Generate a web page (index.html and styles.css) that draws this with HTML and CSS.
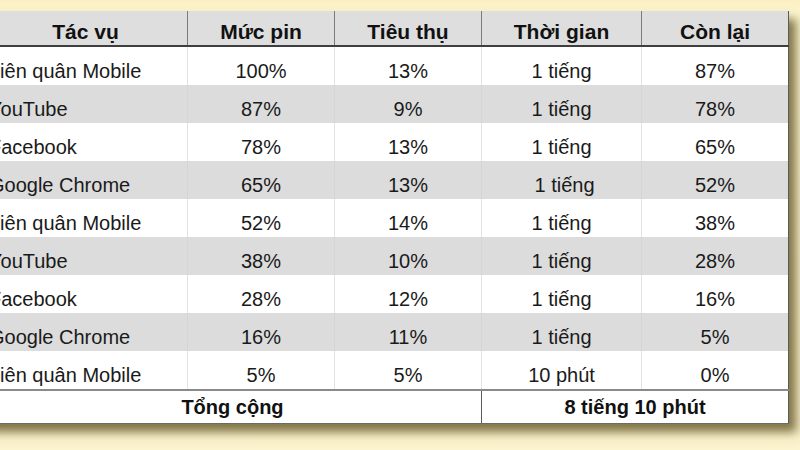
FILE: index.html
```html
<!DOCTYPE html>
<html lang="vi">
<head>
<meta charset="utf-8">
<title>Bảng thời lượng pin</title>
<link rel="stylesheet" href="styles.css">
</head>
<body>
<div class="stage">
  <table class="battery">
    <colgroup>
      <col class="c1"><col class="c2"><col class="c3"><col class="c4"><col class="c5">
    </colgroup>
    <thead>
      <tr><th>Tác vụ</th><th>Mức pin</th><th>Tiêu thụ</th><th>Thời gian</th><th>Còn lại</th></tr>
    </thead>
    <tbody>
      <tr><td class="app">Liên quân Mobile</td><td>100%</td><td>13%</td><td>1 tiếng</td><td>87%</td></tr>
      <tr class="alt"><td class="app">YouTube</td><td>87%</td><td>9%</td><td>1 tiếng</td><td>78%</td></tr>
      <tr><td class="app">Facebook</td><td>78%</td><td>13%</td><td>1 tiếng</td><td>65%</td></tr>
      <tr class="alt"><td class="app">Google Chrome</td><td>65%</td><td>13%</td><td class="shift">1 tiếng</td><td>52%</td></tr>
      <tr><td class="app">Liên quân Mobile</td><td>52%</td><td>14%</td><td>1 tiếng</td><td>38%</td></tr>
      <tr class="alt"><td class="app">YouTube</td><td>38%</td><td>10%</td><td>1 tiếng</td><td>28%</td></tr>
      <tr><td class="app">Facebook</td><td>28%</td><td>12%</td><td>1 tiếng</td><td>16%</td></tr>
      <tr class="alt"><td class="app">Google Chrome</td><td>16%</td><td>11%</td><td>1 tiếng</td><td>5%</td></tr>
      <tr><td class="app">Liên quân Mobile</td><td>5%</td><td>5%</td><td>10 phút</td><td>0%</td></tr>
    </tbody>
    <tfoot>
      <tr><td colspan="3">Tổng cộng</td><td colspan="2">8 tiếng 10 phút</td></tr>
    </tfoot>
  </table>
</div>
</body>
</html>
```
FILE: styles.css
```css
html, body {
  margin: 0;
  padding: 0;
}
body {
  width: 800px;
  height: 450px;
  overflow: hidden;
  background: linear-gradient(to bottom, #fbefc2 0px, #fcf3cd 11px, #f6ecc4 430px, #fcf4cf 450px);
  font-family: "Liberation Sans", Arial, sans-serif;
  color: #1a1a1a;
}
.stage {
  padding-top: 11px;
}
.battery {
  margin-left: -17px;
  width: 805px;
  table-layout: fixed;
  border-collapse: collapse;
  background: #ffffff;
  box-shadow: 7px 8px 9px rgba(88, 78, 30, 0.75);
}
.c1 { width: 204px; }
.c2 { width: 147px; }
.c3 { width: 147px; }
.c4 { width: 160px; }
.c5 { width: 147px; }

.battery th {
  height: 33px;
  padding: 0 0 1px;
  background: #dedede;
  font-size: 21px;
  line-height: 24px;
  font-weight: bold;
  text-align: center;
  vertical-align: bottom;
  border-left: 1px solid #7a7a7a;
  border-bottom: 2px solid #3e3e3e;
  color: #111;
}
.battery th:last-child {
  border-right: 1px solid #5a5a5a;
}
.battery td {
  font-size: 20px;
  line-height: 23px;
  text-align: center;
  vertical-align: bottom;
}
.battery tbody td {
  height: 36px;
  padding: 0 0 2px;
  border-left: 1px solid #e2e2e2;
}
.battery tbody td:last-child {
  border-right: 1px solid #5a5a5a;
}
.battery tbody tr.alt td {
  background: #dcdcdc;
  border-left-color: #d6d6d6;
}
.battery td.app {
  text-align: left;
  padding-left: 5px;
}
.battery td.shift {
  padding-left: 6px;
}
.battery tfoot td {
  height: 32px;
  padding: 0;
  font-weight: bold;
  vertical-align: middle;
  border-top: 2px solid #8a8a8a;
  border-bottom: 1px solid #6a6a6a;
  border-left: 1px solid #5a5a5a;
  border-right: 1px solid #5a5a5a;
  color: #111;
}
```
